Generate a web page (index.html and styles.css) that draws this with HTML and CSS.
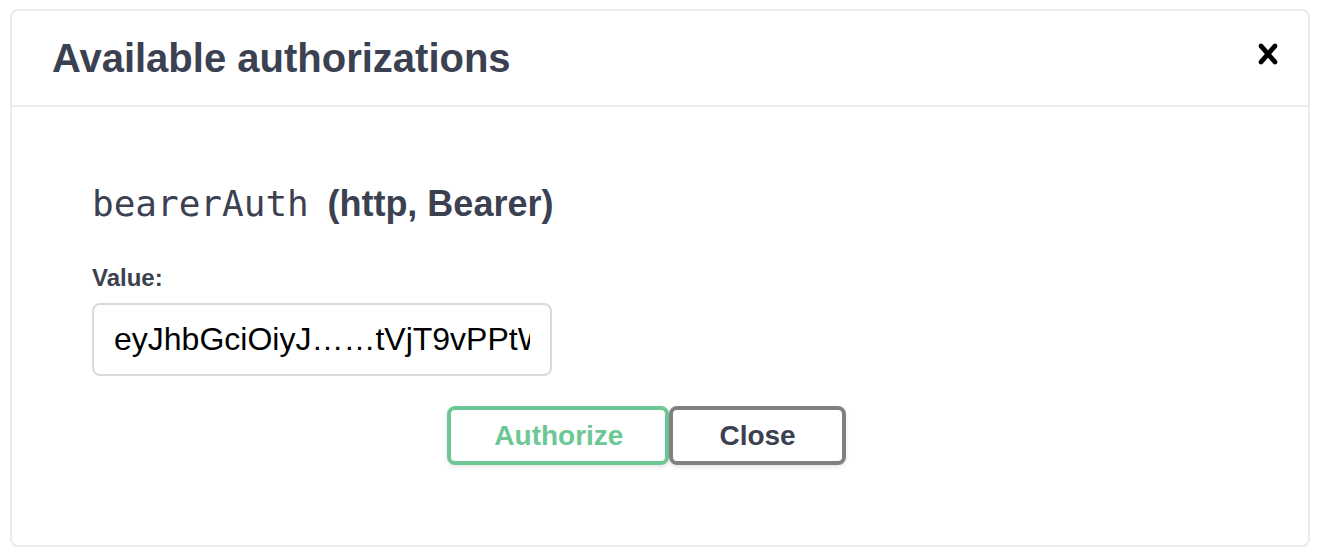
FILE: index.html
```html
<!DOCTYPE html>
<html lang="en">
<head>
<meta charset="utf-8">
<title>Available authorizations</title>
<link rel="stylesheet" href="styles.css">
</head>
<body>
<div class="modal">
  <div class="modal-header">
    <h3 class="modal-title">Available authorizations</h3>
    <button class="close-modal" type="button" aria-label="Close">
      <svg width="40" height="40" viewBox="0 0 20 20" aria-hidden="true"><path d="M14.348 14.849c-.469.469-1.229.469-1.697 0L10 11.819l-2.651 3.029c-.469.469-1.229.469-1.697 0-.469-.469-.469-1.229 0-1.697l2.758-3.150-2.759-3.152c-.469-.469-.469-1.228 0-1.697.469-.469 1.228-.469 1.697 0L10 8.183l2.651-3.031c.469-.469 1.228-.469 1.697 0 .469.469.469 1.229 0 1.697l-2.758 3.152 2.758 3.150c.469.469.469 1.229 0 1.698z"/></svg>
    </button>
  </div>
  <div class="modal-content">
    <div class="auth-container">
      <h4 class="auth-title"><code class="scheme-name">bearerAuth&nbsp;</code>(http, Bearer)</h4>
      <div class="field">
        <label class="field-label" for="token">Value:</label>
        <input class="field-input" id="token" type="text" value="eyJhbGciOiyJ……tVjT9vPPtWkQ">
      </div>
      <div class="btn-wrapper">
        <button class="btn btn-authorize" type="button">Authorize</button>
        <button class="btn btn-close" type="button">Close</button>
      </div>
    </div>
  </div>
</div>
</body>
</html>
```

FILE: styles.css
```css
html, body {
  margin: 0;
  background: #ffffff;
}

body {
  padding: 9px 13px 10px 10px;
  font-family: "Liberation Sans", Arial, Helvetica, sans-serif;
  color: #3b4151;
}

.modal {
  width: 1300px;
  box-sizing: border-box;
  border: 2px solid #ebebeb;
  border-radius: 8px;
  background: #fff;
}

.modal-header {
  display: flex;
  align-items: center;
  justify-content: space-between;
  height: 94px;
  padding: 0 0 0 40px;
  border-bottom: 2px solid #ebebeb;
}

.modal-title {
  margin: 0;
  font-size: 40px;
  font-weight: 700;
  line-height: 1.15;
  color: #3b4151;
}

.close-modal {
  background: none;
  border: none;
  padding: 0 20px;
  margin: 0 0 8px 0;
  cursor: pointer;
  display: flex;
}

.close-modal svg {
  fill: #000;
  display: block;
}

.modal-content {
  padding: 40px;
}

.auth-container {
  padding: 20px 40px;
}

.auth-title {
  margin: 16px 0 40px;
  font-size: 36px;
  font-weight: 700;
  line-height: 1.15;
  color: #3b4151;
}

.scheme-name {
  font-family: "DejaVu Sans Mono", "Liberation Mono", monospace;
  font-weight: 400;
  font-size: 36px;
  color: #3b4151;
  margin-right: -3px;
}

.field {
  display: flex;
  flex-direction: column;
  align-items: flex-start;
}

.field-label {
  font-size: 24px;
  font-weight: 700;
  line-height: 1.15;
  margin: 0 0 11px;
  color: #3b4151;
}

.field-input {
  box-sizing: border-box;
  width: 460px;
  height: 73px;
  margin: 0 0 10px;
  padding: 16px 20px;
  border: 2px solid #d9d9d9;
  border-radius: 8px;
  background: #fff;
  font-family: "Liberation Sans", Arial, Helvetica, sans-serif;
  font-size: 32px;
  color: #000;
  outline: none;
}

.btn-wrapper {
  display: flex;
  justify-content: center;
  padding: 20px 0;
}

.btn {
  font-family: "Liberation Sans", Arial, Helvetica, sans-serif;
  font-size: 28px;
  font-weight: 700;
  line-height: 31px;
  padding: 10px 46px;
  border: 4px solid #808080;
  border-radius: 8px;
  background: transparent;
  box-shadow: 0 2px 4px rgba(0, 0, 0, 0.1);
  cursor: pointer;
}

.btn-authorize {
  color: #6cc794;
  border-color: #6cc794;
  padding: 10px 42px 10px 43px;
}

.btn-close {
  color: #3b4151;
  border-color: #808080;
  margin-right: 27px;
}
```
